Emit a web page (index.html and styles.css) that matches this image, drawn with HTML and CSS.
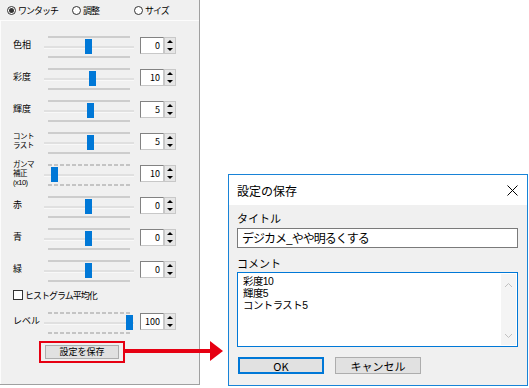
FILE: index.html
```html
<!DOCTYPE html>
<html lang="ja">

<head>
    <meta charset="UTF-8">
    <meta name="viewport" content="width=device-width, initial-scale=1.0">
    <title>設定の保存</title>
    <link rel="stylesheet" href="styles.css">
</head>

<body>
    <div class="panel">
        <div class="modes">
            <label class="mode"><span class="radio on"></span>ワンタッチ</label>
            <label class="mode adjust"><span class="radio"></span>調整</label>
            <label class="mode size"><span class="radio"></span>サイズ</label>
        </div>
        <div class="group">
            <div class="row">
                <div class="name">色相</div>
                <div class="slider"><div class="tick"></div><div class="track"></div><div class="tick"></div><i class="thumb" style="left:41px"></i></div>
                <div class="spin"><span class="val">0</span><span class="arrows"><b class="up"></b><b class="down"></b></span></div>
            </div>
            <div class="row">
                <div class="name">彩度</div>
                <div class="slider"><div class="tick"></div><div class="track"></div><div class="tick"></div><i class="thumb" style="left:45px"></i></div>
                <div class="spin"><span class="val">10</span><span class="arrows"><b class="up"></b><b class="down"></b></span></div>
            </div>
            <div class="row">
                <div class="name">輝度</div>
                <div class="slider"><div class="tick"></div><div class="track"></div><div class="tick"></div><i class="thumb" style="left:43px"></i></div>
                <div class="spin"><span class="val">5</span><span class="arrows"><b class="up"></b><b class="down"></b></span></div>
            </div>
            <div class="row">
                <div class="name small"><span>コント</span><span>ラスト</span></div>
                <div class="slider"><div class="tick"></div><div class="track"></div><div class="tick"></div><i class="thumb" style="left:43px"></i></div>
                <div class="spin"><span class="val">5</span><span class="arrows"><b class="up"></b><b class="down"></b></span></div>
            </div>
            <div class="row">
                <div class="name small"><span>ガンマ</span><span>補正</span><span>(x10)</span></div>
                <div class="slider dashed"><div class="tick"></div><div class="track"></div><div class="tick"></div><i class="thumb" style="left:7px"></i></div>
                <div class="spin"><span class="val">10</span><span class="arrows"><b class="up"></b><b class="down"></b></span></div>
            </div>
            <div class="row">
                <div class="name">赤</div>
                <div class="slider"><div class="tick"></div><div class="track"></div><div class="tick"></div><i class="thumb" style="left:41px"></i></div>
                <div class="spin"><span class="val">0</span><span class="arrows"><b class="up"></b><b class="down"></b></span></div>
            </div>
            <div class="row">
                <div class="name">青</div>
                <div class="slider"><div class="tick"></div><div class="track"></div><div class="tick"></div><i class="thumb" style="left:41px"></i></div>
                <div class="spin"><span class="val">0</span><span class="arrows"><b class="up"></b><b class="down"></b></span></div>
            </div>
            <div class="row">
                <div class="name">緑</div>
                <div class="slider"><div class="tick"></div><div class="track"></div><div class="tick"></div><i class="thumb" style="left:41px"></i></div>
                <div class="spin"><span class="val">0</span><span class="arrows"><b class="up"></b><b class="down"></b></span></div>
            </div>
            <label class="check"><span class="box"></span>ヒストグラム平均化</label>
            <div class="row">
                <div class="name">レベル</div>
                <div class="slider dashed"><div class="tick"></div><div class="track"></div><div class="tick"></div><i class="thumb" style="left:82px"></i></div>
                <div class="spin"><span class="val">100</span><span class="arrows"><b class="up"></b><b class="down"></b></span></div>
            </div>
            <div class="mark">
                <button class="btn">設定を保存</button>
            </div>
        </div>
    </div>

    <svg class="arrow" width="100" height="24" viewBox="0 0 100 24">
        <rect x="0" y="9" width="87" height="4" fill="#e60012"/>
        <polygon points="85,1 98,11 85,21" fill="#e60012"/>
    </svg>

    <div class="dialog">
        <div class="titlebar">
            <span>設定の保存</span>
            <svg class="close" width="11" height="11" viewBox="0 0 11 11">
                <path d="M0.5 0.5 L10.5 10.5 M10.5 0.5 L0.5 10.5" stroke="#000" stroke-width="1" fill="none"/>
            </svg>
        </div>
        <div class="body">
            <div class="label">タイトル</div>
            <div class="input">デジカメ_やや明るくする</div>
            <div class="label comment">コメント</div>
            <div class="memo">
                <div class="text">
                    <div class="line">彩度10</div>
                    <div class="line">輝度5</div>
                    <div class="line">コントラスト5</div>
                </div>
                <div class="vscroll">
                    <svg width="9" height="6" viewBox="0 0 9 6"><polyline points="1,5 4.5,1.5 8,5" stroke="#c0c0c0" fill="none"/></svg>
                    <svg width="9" height="6" viewBox="0 0 9 6"><polyline points="1,1 4.5,4.5 8,1" stroke="#c0c0c0" fill="none"/></svg>
                </div>
            </div>
            <div class="actions">
                <button class="dbtn ok">OK</button>
                <button class="dbtn">キャンセル</button>
            </div>
        </div>
    </div>
</body>

</html>
```

FILE: styles.css
```css
* {
    margin: 0;
    padding: 0;
    box-sizing: border-box;
}

body {
    width: 529px;
    height: 388px;
    background-color: #fff;
    font-family: "Noto Sans CJK JP", "Liberation Sans", sans-serif;
    color: #000;
    position: relative;
    overflow: hidden;
}

/* left panel */
.panel {
    width: 200px;
    height: 385px;
    background-color: #f0f0f0;
    border-right: 1px solid #a0a0a0;
    border-bottom: 1px solid #a0a0a0;
    font-size: 9px;
}

.modes {
    display: flex;
    align-items: center;
    height: 20px;
    padding-left: 7px;
}

.mode {
    display: flex;
    align-items: center;
    letter-spacing: -1px;
}

.mode.adjust {
    margin-left: 14px;
}

.mode.size {
    margin-left: 35px;
}

.radio {
    width: 9px;
    height: 9px;
    margin-right: 2px;
    border: 1px solid #333;
    border-radius: 50%;
    background-color: #fff;
    display: flex;
    align-items: center;
    justify-content: center;
}

.radio.on::after {
    content: "";
    width: 5px;
    height: 5px;
    border-radius: 50%;
    background-color: #333;
}

.group {
    height: 364px;
    border-top: 1px solid #fcfcfc;
    border-left: 1px solid #fcfcfc;
    padding-top: 8px;
}

.row {
    display: flex;
    align-items: flex-start;
    height: 32px;
    padding-left: 12px;
}

.name {
    width: 31px;
    align-self: center;
    line-height: 10px;
}

.name.small {
    display: flex;
    flex-direction: column;
    font-family: "Liberation Sans", "Noto Sans CJK JP", sans-serif;
    font-size: 7.5px;
    letter-spacing: -0.5px;
}

.name.small span {
    height: 9px;
    line-height: 9px;
}

.slider {
    position: relative;
    width: 90px;
    height: 32px;
    padding-top: 7px;
}

.tick {
    height: 2px;
    margin: 0 4px;
    background-color: #cdcdcd;
}

.track {
    height: 3px;
    margin: 8px 0 7px;
    background-color: #e0e0e0;
    border-bottom: 1px solid #f8f8f8;
}

.dashed .tick {
    background: repeating-linear-gradient(to right, #c4c4c4 0 4px, transparent 4px 6px);
}

.thumb {
    position: absolute;
    top: 10px;
    width: 7px;
    height: 15px;
    background-color: #0078d7;
}

.spin {
    display: flex;
    height: 17px;
    margin: 8px 0 0 6px;
}

.val {
    width: 24px;
    height: 17px;
    padding-right: 3px;
    background-color: #fff;
    border: 1px solid #c8c8c8;
    border-top-color: #828282;
    border-left-color: #828282;
    text-align: right;
    line-height: 15px;
}

.arrows {
    display: flex;
    flex-direction: column;
    width: 12px;
    background-color: #e6e6e6;
    border: 1px solid #c8c8c8;
}

.arrows b {
    flex: 1;
    display: flex;
    align-items: center;
    justify-content: center;
}

.arrows b::after {
    content: "";
    border-left: 3px solid transparent;
    border-right: 3px solid transparent;
}

.arrows .up::after {
    border-bottom: 3px solid #000;
}

.arrows .down::after {
    border-top: 3px solid #000;
}

.check {
    display: flex;
    align-items: center;
    height: 20px;
    padding-left: 12px;
    letter-spacing: -1px;
}

.box {
    width: 10px;
    height: 10px;
    margin-right: 2px;
    background-color: #fff;
    border: 1px solid #333;
}

.mark {
    width: 86px;
    margin: 4px 0 0 38px;
    padding: 2px 4px;
    border: 2px solid #e60012;
}

.btn {
    display: block;
    width: 74px;
    height: 14px;
    background-color: #e1e1e1;
    border: 1px solid #adadad;
    font-family: inherit;
    font-size: 9px;
    line-height: 12px;
}

.arrow {
    position: absolute;
    left: 125px;
    top: 340px;
}

/* dialog window */
.dialog {
    position: absolute;
    left: 228px;
    top: 174px;
    width: 300px;
    height: 212px;
    background-color: #f0f0f0;
    border: 1px solid #1883d7;
    font-size: 11px;
}

.titlebar {
    display: flex;
    align-items: center;
    justify-content: space-between;
    height: 30px;
    padding: 0 9px 0 8px;
    background-color: #fff;
    font-size: 12px;
}

.body {
    padding: 6px 9px 0 8px;
}

.label {
    height: 14px;
    line-height: 14px;
}

.label.comment {
    margin-top: 8px;
}

.input {
    height: 20px;
    margin-top: 3px;
    padding-left: 4px;
    background-color: #fff;
    border: 1px solid #7a7a7a;
    font-size: 12px;
    line-height: 18px;
    letter-spacing: -1px;
}

.memo {
    display: flex;
    height: 75px;
    margin-top: 2px;
    background-color: #fff;
    border: 1px solid #0078d7;
}

.text {
    flex: 1;
    padding: 3px 0 0 5px;
    font-family: "Liberation Sans", "Noto Sans CJK JP", sans-serif;
    font-size: 10.4px;
    letter-spacing: -0.5px;
}

.line {
    height: 12px;
    line-height: 12px;
}

.vscroll {
    width: 15px;
    margin: 1px 1px 1px 0;
    display: flex;
    flex-direction: column;
    align-items: center;
    justify-content: space-between;
    padding: 8px 0 6px;
    background-color: #f4f4f4;
}

.actions {
    display: flex;
    gap: 11px;
    margin: 10px 0 0 1px;
}

.dbtn {
    width: 86px;
    height: 17px;
    background-color: #e1e1e1;
    border: 1px solid #adadad;
    font-family: inherit;
    font-size: 11px;
    line-height: 14px;
}

.dbtn.ok {
    border: 2px solid #0078d7;
}
```
